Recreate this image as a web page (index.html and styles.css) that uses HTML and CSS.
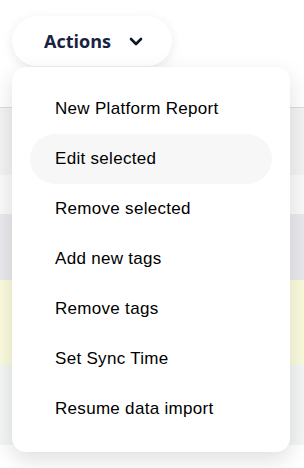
FILE: index.html
```html
<!DOCTYPE html>
<html lang="en">
<head>
    <meta charset="UTF-8">
    <meta name="viewport" content="width=device-width, initial-scale=1.0">
    <title>Actions</title>
    <link rel="stylesheet" href="styles.css">
</head>
<body>
    <div class="page">
        <!-- Toolbar -->
        <div class="toolbar">
            <button class="actions-button" type="button">
                <span>Actions</span>
                <svg class="chevron" width="14" height="9" viewBox="0 0 14 9">
                    <path d="M2 2 L7 7 L12 2" fill="none" stroke="#0f1626" stroke-width="2.6" stroke-linecap="round" stroke-linejoin="round"/>
                </svg>
            </button>
        </div>

        <!-- Table rows behind the menu -->
        <div class="rows">
            <div class="row row-head"></div>
            <div class="row row-gap"></div>
            <div class="row row-sub"></div>
            <div class="row row-warn"></div>
            <div class="row row-light"></div>
        </div>

        <!-- Dropdown menu -->
        <ul class="actions-menu">
            <li class="menu-item">New Platform Report</li>
            <li class="menu-item hover">Edit selected</li>
            <li class="menu-item">Remove selected</li>
            <li class="menu-item">Add new tags</li>
            <li class="menu-item">Remove tags</li>
            <li class="menu-item">Set Sync Time</li>
            <li class="menu-item">Resume data import</li>
        </ul>
    </div>
</body>
</html>
```

FILE: styles.css
```css
body {
    margin: 0;
    background-color: #ffffff;
    font-family: 'Liberation Sans', Arial, sans-serif;
}

.page {
    position: relative;
    min-height: 468px;
}

.toolbar {
    height: 107px;
    padding: 16px 12px 0;
    box-sizing: border-box;
}

.actions-button {
    display: flex;
    align-items: center;
    width: 160px;
    height: 50px;
    padding: 0 0 0 32px;
    border: none;
    border-radius: 25px;
    background-color: #ffffff;
    box-shadow: 0 3px 12px rgba(0, 0, 0, 0.09);
    font-family: 'Open Sans', sans-serif;
    font-size: 18px;
    font-weight: 700;
    color: #17233f;
    cursor: pointer;
}

.chevron {
    margin-left: 18px;
    margin-top: 1px;
}

/* Table rows */
.rows {
    border-top: 1px solid #dcdcde;
}

.row-head {
    height: 67px;
    background-color: #f3f3f4;
}

.row-gap {
    height: 39px;
    background-color: #fafafa;
}

.row-sub {
    height: 66px;
    background-color: #e9e9ed;
}

.row-warn {
    height: 85px;
    background-color: #fafadd;
}

.row-light {
    height: 80px;
    background-color: #f4f5f5;
}

/* Dropdown menu */
.actions-menu {
    position: absolute;
    top: 67px;
    left: 12px;
    width: 278px;
    margin: 0;
    padding: 17px 18px 18px;
    box-sizing: border-box;
    list-style: none;
    background-color: #ffffff;
    border-radius: 14px;
    box-shadow: 0 8px 22px rgba(0, 0, 0, 0.13);
}

.menu-item {
    height: 50px;
    line-height: 50px;
    padding-left: 25px;
    border-radius: 25px;
    font-size: 17px;
    letter-spacing: 0.3px;
    color: #000000;
    cursor: pointer;
}

.menu-item.hover,
.menu-item:hover {
    background-color: #f7f7f7;
}
```
